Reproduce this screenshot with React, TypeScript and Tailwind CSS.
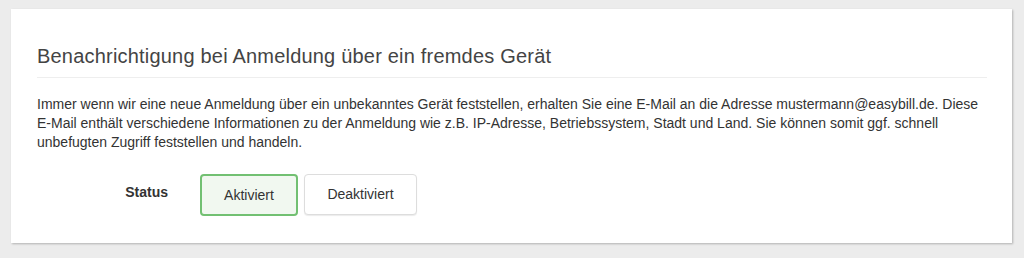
export default function App() {
  return (
    <div className="min-h-[258px] bg-[#ececec] pt-[9px] pl-[11px] pr-[12px] pb-[15px]" style={{ fontFamily: '"Liberation Sans", Arial, sans-serif' }}>
      <div className="bg-white h-[234px] shadow-[1px_1px_2px_rgba(0,0,0,0.25)] pt-[36px] pl-[26px] pr-[25px]">
        <h2 className="text-[20px] leading-[22px] tracking-[0.2px] text-[#444]">Benachrichtigung bei Anmeldung über ein fremdes Gerät</h2>
        <hr className="mt-[10px] border-t border-[#eeeeee]" />
        <p className="mt-[17px] text-[14px] leading-[19px] text-[#333]">
          Immer wenn wir eine neue Anmeldung über ein unbekanntes Gerät feststellen, erhalten Sie eine E-Mail an die Adresse mustermann@easybill.de. Diese E-Mail enthält verschiedene Informationen zu der Anmeldung wie z.B. IP-Adresse, Betriebssystem, Stadt und Land. Sie können somit ggf. schnell unbefugten Zugriff feststellen und handeln.
        </p>
        <div className="mt-[22px] flex items-start">
          <div className="w-[131px] pt-[9px] text-right text-[14px] leading-[19px] font-bold text-[#333]">Status</div>
          <div className="ml-[32px] flex gap-[6px]">
            <button className="w-[98px] h-[42px] rounded-[4px] border-2 border-[#72c072] bg-[#f1f8f0] text-[14px] text-[#333]">Aktiviert</button>
            <button className="w-[113px] h-[41px] rounded-[4px] border border-[#dddddd] bg-white text-[14px] text-[#333] shadow-[0_1px_1px_rgba(0,0,0,0.08)]">Deaktiviert</button>
          </div>
        </div>
      </div>
    </div>
  )
}
